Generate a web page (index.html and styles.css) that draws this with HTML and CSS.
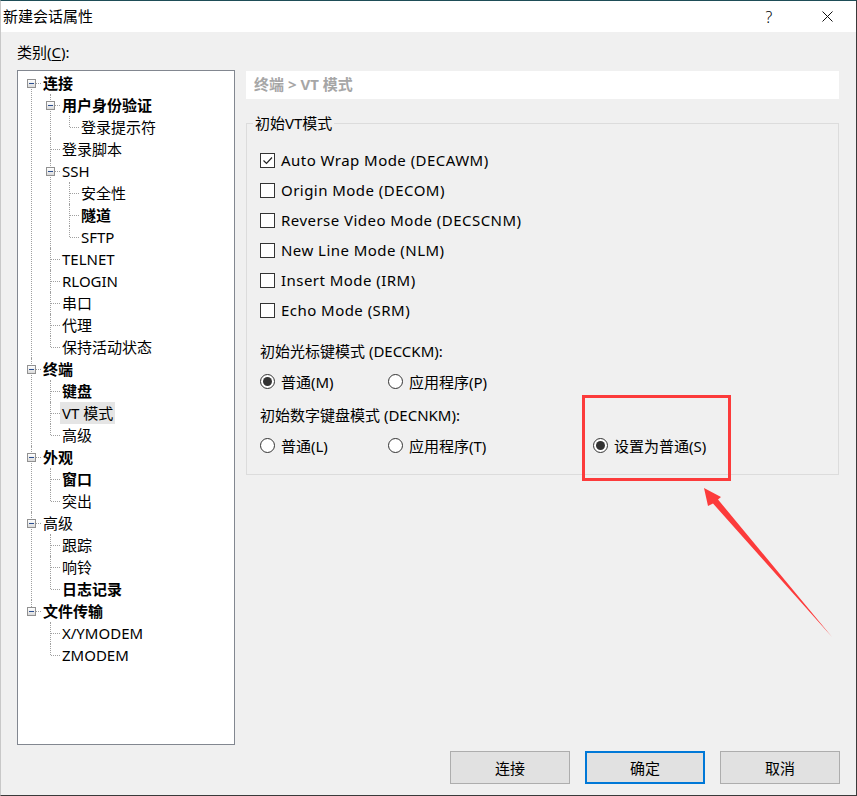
FILE: index.html
```html
<!DOCTYPE html>
<html lang="zh-CN">
<head>
<meta charset="utf-8">
<title>新建会话属性</title>
<link rel="stylesheet" href="styles.css">
</head>
<body>
<div class="window">
  <div class="titlebar">
    <span class="title">新建会话属性</span>
    <span class="cap-btn help">?</span>
    <span class="cap-btn close"><svg width="11" height="11" viewBox="0 0 11 11"><path d="M0.5 0.5 L10.5 10.5 M10.5 0.5 L0.5 10.5" stroke="#111" stroke-width="1" fill="none"/></svg></span>
  </div>

  <div class="content">
    <div class="left">
      <div class="cat-label">类别(<u>C</u>):</div>
      <div class="tree">
        <ul class="root">
          <li><div class="row"><span class="exp"></span><span class="txt b">连接</span></div>
            <ul>
              <li><div class="row"><span class="exp"></span><span class="txt b">用户身份验证</span></div>
                <ul>
                  <li><div class="row"><span class="txt">登录提示符</span></div></li>
                </ul>
              </li>
              <li><div class="row"><span class="txt">登录脚本</span></div></li>
              <li><div class="row"><span class="exp"></span><span class="txt">SSH</span></div>
                <ul>
                  <li><div class="row"><span class="txt">安全性</span></div></li>
                  <li><div class="row"><span class="txt b">隧道</span></div></li>
                  <li><div class="row"><span class="txt">SFTP</span></div></li>
                </ul>
              </li>
              <li><div class="row"><span class="txt">TELNET</span></div></li>
              <li><div class="row"><span class="txt">RLOGIN</span></div></li>
              <li><div class="row"><span class="txt">串口</span></div></li>
              <li><div class="row"><span class="txt">代理</span></div></li>
              <li><div class="row"><span class="txt">保持活动状态</span></div></li>
            </ul>
          </li>
          <li><div class="row"><span class="exp"></span><span class="txt b">终端</span></div>
            <ul>
              <li><div class="row"><span class="txt b">键盘</span></div></li>
              <li><div class="row"><span class="txt sel">VT 模式</span></div></li>
              <li><div class="row"><span class="txt">高级</span></div></li>
            </ul>
          </li>
          <li><div class="row"><span class="exp"></span><span class="txt b">外观</span></div>
            <ul>
              <li><div class="row"><span class="txt b">窗口</span></div></li>
              <li><div class="row"><span class="txt">突出</span></div></li>
            </ul>
          </li>
          <li><div class="row"><span class="exp"></span><span class="txt">高级</span></div>
            <ul>
              <li><div class="row"><span class="txt">跟踪</span></div></li>
              <li><div class="row"><span class="txt">响铃</span></div></li>
              <li><div class="row"><span class="txt b">日志记录</span></div></li>
            </ul>
          </li>
          <li><div class="row"><span class="exp"></span><span class="txt b">文件传输</span></div>
            <ul>
              <li><div class="row"><span class="txt">X/YMODEM</span></div></li>
              <li><div class="row"><span class="txt">ZMODEM</span></div></li>
            </ul>
          </li>
        </ul>
      </div>
    </div>

    <div class="right">
      <div class="crumb">终端 &gt; VT 模式</div>
      <div class="group">
        <span class="legend">初始VT模式</span>
        <div class="checks">
          <div class="check"><span class="box"><svg width="13" height="13" viewBox="0 0 13 13"><path d="M2.5 6.5 L5.5 9.5 L11 3.5" stroke="#222" stroke-width="1.2" fill="none"/></svg></span><span class="clabel">Auto Wrap Mode (DECAWM)</span></div>
          <div class="check"><span class="box"></span><span class="clabel">Origin Mode (DECOM)</span></div>
          <div class="check"><span class="box"></span><span class="clabel">Reverse Video Mode (DECSCNM)</span></div>
          <div class="check"><span class="box"></span><span class="clabel">New Line Mode (NLM)</span></div>
          <div class="check"><span class="box"></span><span class="clabel">Insert Mode (IRM)</span></div>
          <div class="check"><span class="box"></span><span class="clabel">Echo Mode (SRM)</span></div>
        </div>
        <div class="sublabel">初始光标键模式 (DECCKM):</div>
        <div class="radios">
          <div class="opt"><span class="radio on"></span>普通(M)</div>
          <div class="opt"><span class="radio"></span>应用程序(P)</div>
        </div>
        <div class="sublabel second">初始数字键盘模式 (DECNKM):</div>
        <div class="radios">
          <div class="opt"><span class="radio"></span>普通(L)</div>
          <div class="opt"><span class="radio"></span>应用程序(T)</div>
          <div class="opt"><span class="radio on"></span>设置为普通(S)</div>
        </div>
      </div>
    </div>
  </div>

  <div class="footer">
    <div class="btn">连接</div>
    <div class="btn default">确定</div>
    <div class="btn">取消</div>
  </div>

  <svg class="annot" width="857" height="796" viewBox="0 0 857 796">
    <rect x="583.5" y="396.5" width="146" height="83" fill="none" stroke="#fc3b3b" stroke-width="3"/>
    <polygon points="704,488 721,497 718,499.5 832,637 713,503.5 708,506" fill="#fc3b3b"/>
  </svg>
</div>
</body>
</html>
```

FILE: styles.css
```css
body {
  margin: 0;
  font-family: "Noto Sans", "Noto Sans CJK SC", sans-serif;
  font-size: 15px;
  color: #000;
}

.window {
  position: relative;
  width: 857px;
  height: 796px;
  box-sizing: border-box;
  border-top: 1px solid #1e4d57;
  border-right: 1px solid #3a3a3a;
  border-bottom: 1px solid #3a3a3a;
  border-left: 1px solid #c8c8c8;
  background: #f0f0f0;
  display: flex;
  flex-direction: column;
}

/* title bar */
.titlebar {
  height: 31px;
  flex: none;
  background: #fff;
  display: flex;
  align-items: center;
}
.title {
  flex: 1;
  padding-left: 2px;
  line-height: 31px;
}
.cap-btn {
  width: 58px;
  height: 31px;
  display: flex;
  align-items: center;
  justify-content: center;
}
.help {
  font-size: 16px;
  font-weight: 300;
}

/* main area */
.content {
  flex: 1;
  display: grid;
  grid-template-columns: 218px 593px;
  column-gap: 11px;
  padding: 10px 0 0 16px;
  align-items: start;
}
.cat-label {
  height: 20px;
  line-height: 20px;
}
.cat-label u {
  text-underline-offset: 2px;
}

/* tree */
.tree {
  margin-top: 8px;
  height: 675px;
  box-sizing: border-box;
  border: 1px solid #828790;
  background: #fff;
  padding-top: 1px;
  overflow: hidden;
}
.tree ul {
  list-style: none;
  margin: 0;
  padding: 0;
}
.tree ul.root {
  padding-left: 9px;
}
.tree ul ul {
  margin-left: 19px;
}
.tree li {
  position: relative;
}
.tree li::before {
  content: "";
  position: absolute;
  left: 4px;
  top: 0;
  bottom: 0;
  border-left: 1px dotted #a0a0a0;
}
.tree li:last-child::before {
  bottom: auto;
  height: 11px;
}
.tree ul.root > li:first-child::before {
  top: 11px;
}
.tree li::after {
  content: "";
  position: absolute;
  left: 5px;
  top: 11px;
  width: 9px;
  border-top: 1px dotted #a0a0a0;
}
.row {
  position: relative;
  height: 22px;
  display: flex;
  align-items: center;
  padding-left: 16px;
  white-space: nowrap;
}
.exp {
  position: absolute;
  left: 0;
  top: 7px;
  width: 9px;
  height: 9px;
  box-sizing: border-box;
  border: 1px solid #919191;
  background: linear-gradient(#ffffff, #dadada);
  z-index: 2;
}
.exp::after {
  content: "";
  position: absolute;
  left: 1px;
  top: 3px;
  width: 5px;
  height: 1px;
  background: #2c4f8f;
}
.txt {
  line-height: 22px;
}
.txt.b {
  font-weight: 700;
}
.txt.sel {
  background: #e5e5e5;
  padding: 0 2px;
  margin-left: -2px;
}

/* right panel */
.right {
  padding-top: 29px;
}
.crumb {
  height: 28px;
  line-height: 27px;
  background: #fff;
  padding-left: 8px;
  color: #a6a6a6;
  font-weight: 700;
}
.group {
  margin-top: 24px;
  border: 1px solid #dcdcdc;
  padding: 0 0 14px 13px;
}
.legend {
  display: block;
  width: max-content;
  margin: -11px 0 0 -7px;
  padding: 0 2px;
  line-height: 20px;
  background: #f0f0f0;
}
.checks {
  margin-top: 12px;
}
.check {
  height: 30px;
  display: flex;
  align-items: center;
}
.clabel {
  letter-spacing: 0.46px;
}
.box {
  width: 15px;
  height: 15px;
  box-sizing: border-box;
  border: 1px solid #333;
  background: #fff;
  margin-right: 6px;
  display: flex;
  align-items: center;
  justify-content: center;
}
.sublabel {
  margin-top: 11px;
  height: 30px;
  line-height: 30px;
}
.sublabel.second {
  margin-top: 4px;
}
.radios {
  display: grid;
  grid-template-columns: 128px 205px auto;
  height: 30px;
}
.opt {
  display: flex;
  align-items: center;
}
.radio {
  width: 15px;
  height: 15px;
  box-sizing: border-box;
  border: 1px solid #333;
  border-radius: 50%;
  background: #fff;
  margin-right: 6px;
  display: flex;
  align-items: center;
  justify-content: center;
}
.radio.on::after {
  content: "";
  width: 9px;
  height: 9px;
  border-radius: 50%;
  background: #333;
}

/* footer */
.footer {
  flex: none;
  height: 33px;
  padding: 0 16px 11px 0;
  display: flex;
  justify-content: flex-end;
  gap: 15px;
}
.btn {
  width: 120px;
  height: 33px;
  box-sizing: border-box;
  border: 1px solid #adadad;
  background: #e1e1e1;
  display: flex;
  align-items: center;
  justify-content: center;
}
.btn.default {
  border: 2px solid #0078d7;
}

/* annotation overlay */
.annot {
  position: absolute;
  left: -1px;
  top: -1px;
  pointer-events: none;
}
```
